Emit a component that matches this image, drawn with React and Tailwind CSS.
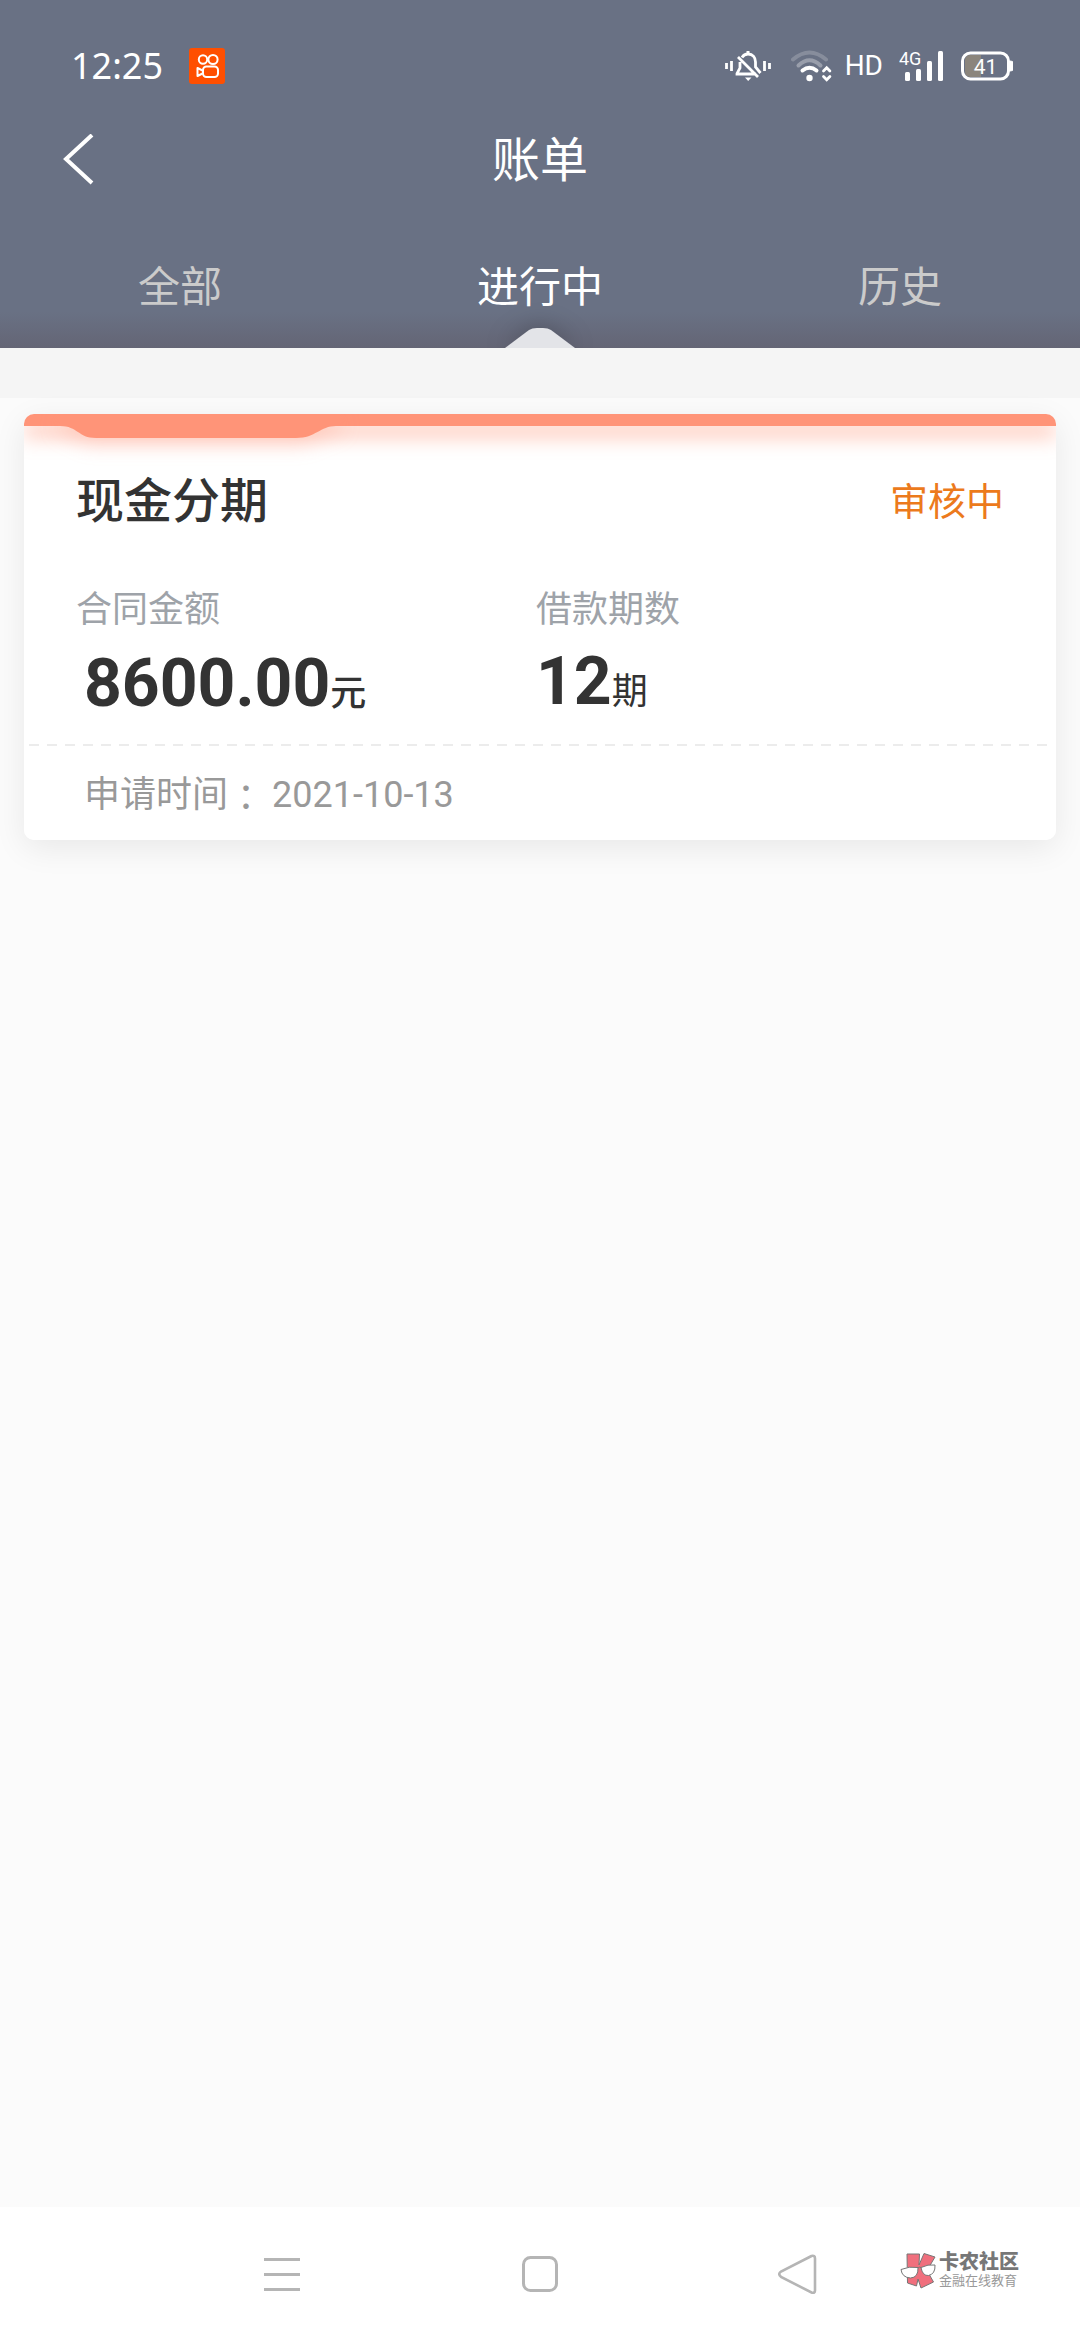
import { useState } from "react";
import clsx from "clsx";

const TABS = [
    { id: "all", label: "全部" },
    { id: "ongoing", label: "进行中" },
    { id: "history", label: "历史" },
];

const BILLS = [
    {
        id: 1,
        title: "现金分期",
        status: "审核中",
        amount: "8600.00",
        periods: "12",
        date: "2021-10-13",
    },
];

function AppBadge() {
    return (
        <svg viewBox="0 0 36 36" className="h-9 w-9" fill="none" stroke="#fff" strokeWidth="2">
            <rect width="36" height="36" rx="3" fill="#ff4f00" stroke="none" />
            <circle cx="14" cy="11.5" r="4.2" />
            <circle cx="24" cy="11.5" r="4.6" />
            <rect x="14" y="18.5" width="15" height="10.5" rx="3.5" />
            <path d="M13.5 22.5 8.5 20v8l5-2.5" strokeLinejoin="round" />
        </svg>
    );
}

function MutedBell() {
    return (
        <svg viewBox="0 0 46 32" className="h-8 w-[46px]" fill="none" stroke="#fff" strokeWidth="2.8">
            <path d="M1.5 13v6M6.500 11v10M39.500 11v10M44.500 13v6" />
            <path d="M17 7.500C18.500 5 20.500 4 23 4c5 0 7.500 3.500 7.500 8v5l5 6" />
            <path d="M23 1v3" strokeWidth="3" />
            <path d="M15 12v6l-3 5.500V24h19M13 7l20 20" />
            <path d="M20 27.500h6.500L23.200 31z" fill="#fff" stroke="none" />
        </svg>
    );
}

function Wifi() {
    return (
        <svg viewBox="0 0 42 32" className="h-8 w-[42px]" fill="none" stroke="#fff" strokeLinecap="round">
            <path d="M2 9.500Q18.500 -4.500 35 9.500" strokeWidth="4" opacity=".2" />
            <path d="M7.500 15.500Q18.500 5 29.500 15.500" strokeWidth="4" opacity=".32" />
            <path d="M11.500 20.500Q18.500 15 25.500 20.500" strokeWidth="4" />
            <circle cx="18.500" cy="28" r="3.200" fill="#fff" stroke="none" />
            <path d="m32.500 21 3.200-3.200 3.200 3.200M32.500 26.500l3.200 3.200 3.200-3.200" strokeWidth="2.800" />
        </svg>
    );
}

function Signal() {
    return (
        <svg viewBox="0 -6 46 44" className="h-11 w-[46px]" fill="#fff">
            <text x="0" y="15" fontSize="18" fontFamily="Roboto, sans-serif">4G</text>
            <rect x="6" y="22" width="5" height="9" rx="1.500" />
            <rect x="17" y="19" width="5" height="12" rx="1.500" />
            <rect x="28" y="11" width="5" height="20" rx="1.500" />
            <rect x="39" y="1" width="5" height="30" rx="1.500" />
        </svg>
    );
}

function Battery() {
    return (
        <svg viewBox="0 0 52 30" className="h-[30px] w-[52px]" fill="none">
            <path d="M9 4h11v22H9a5 5 0 0 1-5-5V9a5 5 0 0 1 5-5z" fill="#8b857c" />
            <rect x="1.500" y="2" width="46" height="26" rx="8" stroke="#fff" strokeWidth="3" />
            <path d="M49 10v10a5 5 0 0 0 0-10z" fill="#fff" stroke="#fff" />
            <text x="24.500" y="22.500" textAnchor="middle" fontSize="21" fill="#fff" fontFamily="Roboto, sans-serif">41</text>
        </svg>
    );
}

function StatusBar() {
    return (
        <div className="flex h-28 items-center justify-between pt-5 pr-[67px] pl-[71px]">
            <div className="flex items-center gap-[26px]">
                <span className="font-['Noto_Sans'] text-4xl">12:25</span>
                <AppBadge />
            </div>
            <div className="flex items-center">
                <MutedBell />
                <span className="ml-5"><Wifi /></span>
                <span className="ml-3 text-[28px] leading-8">HD</span>
                <span className="ml-4"><Signal /></span>
                <span className="ml-4"><Battery /></span>
            </div>
        </div>
    );
}

function BillCard({ bill }) {
    return (
        <article className="relative overflow-hidden rounded-[10px] bg-white pt-10">
            {/* Orange edge with the hanging tab */}
            <div className="absolute inset-x-0 top-0 h-3 bg-[#ff9478] shadow-[0_10px_20px_#ff9478a0]" />
            <svg viewBox="0 0 280 24" className="absolute top-0 left-9 h-6 w-[280px] overflow-visible drop-shadow-[0_6px_10px_#ff947850]">
                <path d="M0 0v12C18 12 18 24 36 24H236C256 24 260 12 276 12h4V0z" fill="#ff9478" />
            </svg>

            <div className="relative flex h-24 items-center justify-between px-[52px]">
                <h2 className="text-5xl font-medium text-[#333]">{bill.title}</h2>
                <span className="text-[38px] text-[#ec7a1c]">{bill.status}</span>
            </div>

            <dl className="grid grid-cols-2 pt-10 pr-[60px] pl-[52px] text-[#333]">
                <div>
                    <dt className="text-4xl text-[#9ea3a9]">合同金额</dt>
                    <dd className="flex items-baseline pt-[6px] pl-2">
                        <span className="text-[66px] leading-[96px] font-bold">{bill.amount}</span>
                        <span className="text-4xl font-medium">元</span>
                    </dd>
                </div>
                <div>
                    <dt className="text-4xl text-[#9ea3a9]">借款期数</dt>
                    <dd className="flex items-baseline pt-1">
                        <span className="text-[66px] leading-[96px] font-bold">{bill.periods}</span>
                        <span className="text-4xl">期</span>
                    </dd>
                </div>
            </dl>

            <div className="mx-[5px] mt-3 h-[2px] bg-[repeating-linear-gradient(90deg,#ececec_0_10px,transparent_10px_18px)]" />

            <p className="flex h-[94px] items-center pt-1 pl-[60px] text-4xl text-[#999]">
                <span>申请时间</span>
                <span lang="zh-Hant" className="font-['Noto_Sans_CJK_TC']">：</span>
                <time className="pl-2">{bill.date}</time>
            </p>
        </article>
    );
}

function NavBar() {
    return (
        <footer className="relative bg-white">
            <nav className="grid h-[133px] grid-cols-3 items-center justify-items-center px-[153px]">
                <button aria-label="菜单">
                    <svg viewBox="0 0 40 40" className="h-10 w-10" stroke="#b5b5b5" strokeWidth="3">
                        <path d="M2 5.500h36M2 20.500h36M2 35.500h36" />
                    </svg>
                </button>
                <button aria-label="主页">
                    <svg viewBox="0 0 40 40" className="h-10 w-10" fill="none" stroke="#b5b5b5" strokeWidth="3">
                        <rect x="3.500" y="3.500" width="33" height="33" rx="7" />
                    </svg>
                </button>
                <button aria-label="返回">
                    <svg viewBox="0 0 40 40" className="h-10 w-10" fill="none" stroke="#b5b5b5" strokeWidth="2.600">
                        <path d="M33.500 2 3 17.500Q-.5 20 3 22.800L33.500 38.500Q37 39.500 37 36.500V4.500Q37 1 33.500 2z" />
                    </svg>
                </button>
            </nav>

            {/* Community logo over the nav bar */}
            <div className="absolute top-11 right-[61px] flex items-start gap-[2px]">
                <svg viewBox="0 0 38 40" className="h-10 w-[38px]" stroke="#777" strokeWidth="1" strokeLinejoin="round">
                    <path d="M8 3h12.500L20 14 25 2.500 36 6 28 19.500 34.500 31 22 37l-3-9-1.500 7L8.500 32z" fill="#f06f7d" />
                    <path d="M2 18.500q8-3.500 17-2 .5 10-7.500 10.500Q3 26.500 2 18.500z" fill="#fff" />
                    <path d="M22 16.500q7-3.500 14-2.500.5 9-6.500 10.500-6 .5-7.500-8z" fill="#fff" />
                    <path d="M19 17q1.500-1.500 3-.5" fill="none" />
                </svg>
                <div className="flex flex-col">
                    <span className="text-xl leading-[22px] font-black text-[#777]">卡农社区</span>
                    <span className="text-[13px] leading-4 text-[#999]">金融在线教育</span>
                </div>
            </div>
        </footer>
    );
}

export default function App() {
    const [activeTab, setActiveTab] = useState("ongoing");

    return (
        <div className="flex min-h-screen flex-col bg-[#fbfbfb] font-[Roboto,'Noto_Sans_CJK_SC',sans-serif]">
            <header className="overflow-hidden bg-[linear-gradient(to_top,#646575,#697184_36px)] text-white">
                <StatusBar />

                <div className="relative flex h-24 items-center justify-center pt-[2px]">
                    <button className="absolute left-[60px]" aria-label="返回">
                        <svg viewBox="0 0 36 54" className="h-[54px] w-9" fill="none" stroke="#fff" strokeWidth="4">
                            <path d="M32 1 6 25 32 49" />
                        </svg>
                    </button>
                    <h1 className="text-5xl">账单</h1>
                </div>

                <nav className="grid h-[140px] grid-cols-3">
                    {TABS.map((tab) => (
                        <button
                            key={tab.id}
                            onClick={() => setActiveTab(tab.id)}
                            className={clsx(
                                "relative pt-[18px] text-[42px]",
                                activeTab === tab.id ? "text-white" : "text-[#cbcbcb]"
                            )}
                        >
                            {tab.label}
                            {activeTab === tab.id && (
                                <svg
                                    viewBox="0 0 70 20"
                                    className="absolute bottom-0 left-1/2 h-5 w-[70px] -translate-x-1/2 drop-shadow-[0_0_12px_#0004]"
                                >
                                    <path d="M0 20 24 2Q27 0 32 0h6q5 0 8 2l24 18z" fill="#e3e4e8" />
                                </svg>
                            )}
                        </button>
                    ))}
                </nav>
            </header>

            <div className="h-[50px] bg-[#f5f5f5]" />

            <main className="flex-1 px-6 pt-4">
                {BILLS.map((bill) => (
                    <div key={bill.id} className="rounded-[10px] shadow-[0_8px_32px_#00000014]">
                        <BillCard bill={bill} />
                    </div>
                ))}
            </main>

            <NavBar />
        </div>
    );
}
